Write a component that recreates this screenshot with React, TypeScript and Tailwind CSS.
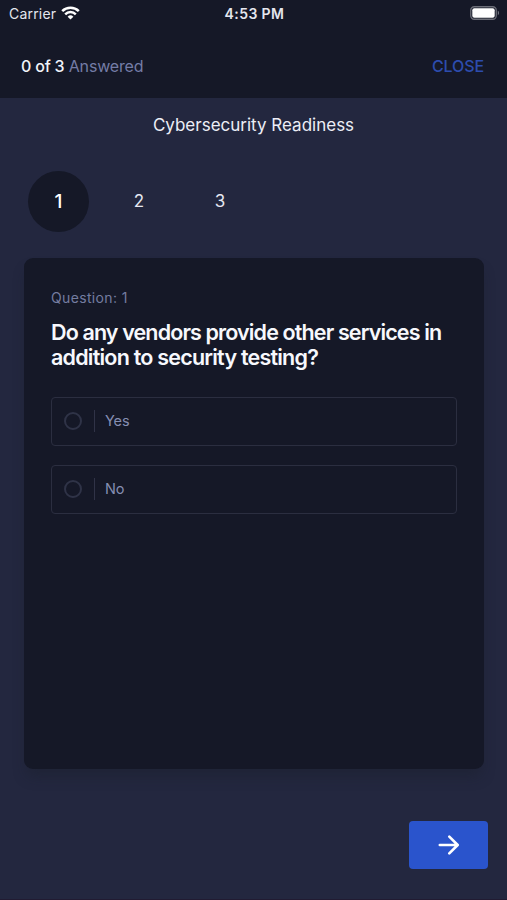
import React, { useState } from "react";

function StatusBar() {
  return (
    <div className="grid h-7 grid-cols-3 items-center pr-[7px] pl-[9px] text-[14px] leading-7 text-[#e4e6ee]">
      <div className="flex items-center gap-[5px]">
        <span className="tracking-[0.2px]">Carrier</span>
        <svg className="-mt-[3px]" width="19" height="14" viewBox="0 0 19 14" fill="none" stroke="#fff" strokeWidth="2.5">
          <path d="M1.2 5.2a11.8 11.8 0 0 1 16.6 0" />
          <path d="M4.2 8.3a7.5 7.5 0 0 1 10.6 0" />
          <path d="M9.5 13.6 6.6 10.7a4.1 4.1 0 0 1 5.8 0Z" fill="#fff" stroke="none" />
        </svg>
      </div>
      <span className="text-center font-semibold tracking-[0.4px] whitespace-nowrap">4:53 PM</span>
      <svg className="-mt-[2px] justify-self-end" width="30" height="14" viewBox="0 0 30 14" fill="none">
        <rect x="0.75" y="0.75" width="25.5" height="12.5" rx="3.5" stroke="#6c6e78" strokeWidth="1.3" />
        <rect x="2.3" y="2.3" width="22.4" height="9.4" rx="2" fill="#fff" />
        <path d="M27.8 4.8c1.6.5 1.6 3.9 0 4.4Z" fill="#747681" />
      </svg>
    </div>
  );
}

function Option({ label, checked, onSelect }: { label: string; checked: boolean; onSelect: () => void }) {
  return (
    <button
      onClick={onSelect}
      className="flex h-[49px] w-full items-center rounded-[4px] border-[1.5px] border-[#2b2e40] pb-px pl-3 text-left"
    >
      <span className="flex size-[18px] items-center justify-center rounded-full border-2 border-[#2f3347]">
        {checked && <span className="size-2 rounded-full bg-[#2a54ce]" />}
      </span>
      <span className="ml-3 h-[22px] w-px bg-[#303347]" />
      <span className="ml-[10px] text-[14.5px] tracking-[-0.15px] text-[#858eb2]">{label}</span>
    </button>
  );
}

export default function App() {
  const [answer, setAnswer] = useState("");
  return (
    <div className="flex h-[900px] w-[507px] flex-col overflow-hidden bg-[#23273f] font-['Inter',sans-serif]">
      <header className="h-[98px] shrink-0 bg-[#151827]">
        <StatusBar />
        <div className="flex h-[76px] items-center justify-between pr-[23px] pl-[21px] text-[16px]">
          <p className="tracking-[-0.18px] text-[#747ca6]">
            <span className="font-medium tracking-[-0.2px] text-[#f1f3fa]">0 of 3</span> Answered
          </p>
          <button className="font-medium tracking-[-0.1px] text-[#2d4cae]">CLOSE</button>
        </div>
      </header>
      <h1 className="mt-[15px] text-center text-[17px] leading-6 text-[#eceef6]">Cybersecurity Readiness</h1>
      <nav className="mt-[34px] flex gap-5 pl-7 text-[17px] text-[#e6e8f2]">
        <button className="size-[61px] rounded-full bg-[#151827] pt-[2px] text-[19px] font-medium text-white">1</button>
        <button className="size-[61px] pt-px pr-px">2</button>
        <button className="size-[61px] pt-px pr-px">3</button>
      </nav>
      <main className="mt-[26px] mr-[23px] ml-6 h-[511px] shrink-0 rounded-[9px] bg-[#151827] px-[27px] pt-[30px] shadow-[0_10px_14px_-3px_rgba(24,30,40,0.4)]">
        <p className="text-[14px] leading-5 tracking-[0.35px] text-[#747ca0]">Question: 1</p>
        <h2 className="mt-3 text-[21.5px] leading-[25px] font-semibold tracking-[-0.87px] whitespace-nowrap text-[#f7f8fd]">
          Do any vendors provide other services in
          <br />
          <span className="tracking-[-0.78px]">addition to security testing?</span>
        </h2>
        <div className="mt-[27px] flex flex-col gap-[19px]">
          {["Yes", "No"].map((label) => (
            <Option key={label} label={label} checked={answer === label} onSelect={() => setAnswer(label)} />
          ))}
        </div>
      </main>
      <button
        aria-label="Next"
        className="mt-[52px] mr-[19px] flex h-[48px] w-[79px] shrink-0 items-center justify-center self-end rounded-[4px] bg-[#2a54cc]"
      >
        <svg width="22" height="20" viewBox="0 0 22 20" fill="none" stroke="#fff" strokeWidth="2.6" strokeLinecap="round" strokeLinejoin="round">
          <path d="M1.8 10h17.6M11.3 1.6 19.7 10l-8.4 8.4" />
        </svg>
      </button>
      <div className="mt-auto h-px bg-[#211b32]" />
    </div>
  );
}
